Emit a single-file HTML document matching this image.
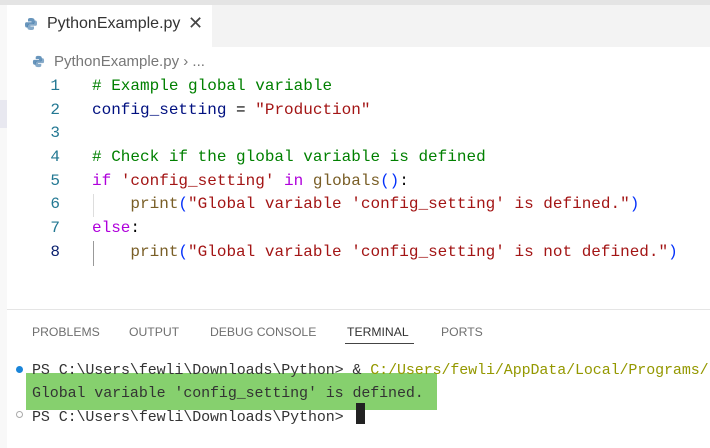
<!DOCTYPE html>
<html><head><meta charset="utf-8"><style>
*{margin:0;padding:0;box-sizing:border-box}
body{width:710px;height:448px;background:#fff;position:relative;overflow:hidden;font-family:"Liberation Sans",sans-serif}
.top{position:absolute;left:0;top:0;width:710px;height:5px;background:#e4e4e4}
.left{position:absolute;left:0;top:5px;width:7px;height:443px;background:#f8f8f8}
.tabbar{position:absolute;left:7px;top:5px;width:703px;height:42px;background:#f3f3f3}
.tab{position:absolute;left:7px;top:5px;width:205px;height:42px;background:#fff}
.mono{font-family:"Liberation Mono",monospace;font-size:16px;white-space:pre}
.ln{position:absolute;left:30px;width:30px;text-align:right;color:#237893}
.cl{position:absolute;left:92px}
.c{color:#008000}.v{color:#001080}.s{color:#a31515}.k{color:#af00db}.f{color:#795e26}.p{color:#0431fa}.d{color:#000}
.ptab{position:absolute;top:325px;font-size:12.2px;color:#6f6f6f}
.term{font-family:"Liberation Mono",monospace;font-size:15px;letter-spacing:-0.1px;white-space:pre}
.t{position:absolute;left:32px;color:#333;width:678px;overflow:hidden}
</style></head><body>
<div class="top"></div><div class="left"></div>
<div class="tabbar"></div><div class="tab"></div>
<svg style="position:absolute;left:24px;top:17px" width="14" height="14" viewBox="0 0 14 14"><path d="M7 1C4 1 4 2 4 3v1.5h3.5v.7H2.5C1 5.2 1 6.5 1 8s.5 2.5 1.5 2.5H4V9c0-1 1-2 2-2h3c1 0 1.5-.7 1.5-1.5V3C10.5 1.5 9 1 7 1z" fill="#3572a5" opacity=".75"/><path d="M7 13c3 0 3-1 3-2V9.5H6.5v-.7h5c1.5 0 1.5-1.3 1.5-2.8s-.5-2.5-1.5-2.5H10V5c0 1-1 2-2 2H5c-1 0-1.5.7-1.5 1.5V11C3.5 12.5 5 13 7 13z" fill="#3572a5" opacity=".6"/></svg>
<div style="position:absolute;left:47px;top:15px;font-size:16px;color:#333">PythonExample.py</div>
<div style="position:absolute;left:188px;top:13px;font-size:18px;color:#444">✕</div>
<svg style="position:absolute;left:32px;top:55px" width="13" height="13" viewBox="0 0 14 14"><path d="M7 1C4 1 4 2 4 3v1.5h3.5v.7H2.5C1 5.2 1 6.5 1 8s.5 2.5 1.5 2.5H4V9c0-1 1-2 2-2h3c1 0 1.5-.7 1.5-1.5V3C10.5 1.5 9 1 7 1z" fill="#3572a5" opacity=".75"/><path d="M7 13c3 0 3-1 3-2V9.5H6.5v-.7h5c1.5 0 1.5-1.3 1.5-2.8s-.5-2.5-1.5-2.5H10V5c0 1-1 2-2 2H5c-1 0-1.5.7-1.5 1.5V11C3.5 12.5 5 13 7 13z" fill="#3572a5" opacity=".6"/></svg>
<div style="position:absolute;left:54px;top:53px;font-size:15px;color:#777">PythonExample.py › ...</div>
<div style="position:absolute;left:0;top:100px;width:7px;height:28px;background:#e8e8f0"></div>
<div class="mono">
<div class="ln" style="top:77px">1</div><div class="cl" style="top:77px"><span class="c"># Example global variable</span></div>
<div class="ln" style="top:101px">2</div><div class="cl" style="top:101px"><span class="v">config_setting</span><span class="d"> = </span><span class="s">"Production"</span></div>
<div class="ln" style="top:124px">3</div>
<div class="ln" style="top:148px">4</div><div class="cl" style="top:148px"><span class="c"># Check if the global variable is defined</span></div>
<div class="ln" style="top:172px">5</div><div class="cl" style="top:172px"><span class="k">if</span> <span class="s">'config_setting'</span> <span class="k">in</span> <span class="f">globals</span><span class="p">()</span><span class="d">:</span></div>
<div class="ln" style="top:195px">6</div><div class="cl" style="top:195px">    <span class="f">print</span><span class="p">(</span><span class="s">"Global variable 'config_setting' is defined."</span><span class="p">)</span></div>
<div class="ln" style="top:219px">7</div><div class="cl" style="top:219px"><span class="k">else</span><span class="d">:</span></div>
<div class="ln" style="top:243px;color:#0b216f">8</div><div class="cl" style="top:243px">    <span class="f">print</span><span class="p">(</span><span class="s">"Global variable 'config_setting' is not defined."</span><span class="p">)</span></div>
</div>
<div style="position:absolute;left:93px;top:194px;width:1px;height:23px;background:#ddd"></div>
<div style="position:absolute;left:93px;top:241px;width:1px;height:25px;background:#999"></div>
<div style="position:absolute;left:7px;top:309px;width:703px;height:1px;background:#e5e5e5"></div>
<div class="ptab" style="left:32px">PROBLEMS</div>
<div class="ptab" style="left:129px">OUTPUT</div>
<div class="ptab" style="left:210px">DEBUG CONSOLE</div>
<div class="ptab" style="left:347px;color:#333">TERMINAL</div>
<div style="position:absolute;left:345px;top:343px;width:69px;height:1px;background:#444"></div>
<div class="ptab" style="left:441px">PORTS</div>
<div style="position:absolute;left:26px;top:373px;width:411px;height:37px;background:#86d06e"></div>
<div style="position:absolute;left:16px;top:366px;width:7px;height:7px;border-radius:50%;background:#1a85d9"></div>
<div style="position:absolute;left:16px;top:411px;width:7px;height:7px;border-radius:50%;border:1px solid #aaa"></div>
<div class="term">
<div class="t" style="top:362px">PS C:\Users\fewli\Downloads\Python&gt; &amp; <span style="color:#949800">C:/Users/fewli/AppData/Local/Programs/</span></div>
<div class="t" style="top:385px">Global variable 'config_setting' is defined.</div>
<div class="t" style="top:409px">PS C:\Users\fewli\Downloads\Python&gt; </div>
</div>
<div style="position:absolute;left:356px;top:403px;width:9px;height:21px;background:#222"></div>
</body></html>
